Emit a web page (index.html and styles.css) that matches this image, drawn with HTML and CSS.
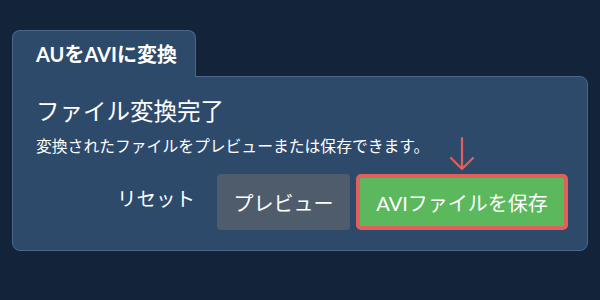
FILE: index.html
```html
<!DOCTYPE html>
<html lang="ja">
<head>
<meta charset="utf-8">
<link rel="stylesheet" href="styles.css">
</head>
<body>
<div class="wrap">
  <div class="tab">AUをAVIに変換</div>
  <div class="panel">
    <h1 class="title">ファイル変換完了</h1>
    <p class="desc">変換されたファイルをプレビューまたは保存できます。</p>
    <div class="actions">
      <button class="btn btn-reset">リセット</button>
      <button class="btn btn-preview">プレビュー</button>
      <div class="save-wrap">
        <svg class="arrow" width="30" height="36" viewBox="0 0 30 36" aria-hidden="true">
          <path d="M15 2 V33 M4 22 L15 33 L26 22" fill="none" stroke="#e0605a" stroke-width="2.2" stroke-linecap="round" stroke-linejoin="round"/>
        </svg>
        <button class="btn btn-save">AVIファイルを保存</button>
      </div>
    </div>
  </div>
</div>
</body>
</html>
```
FILE: styles.css
```css
* { box-sizing: border-box; }
html, body { margin: 0; padding: 0; }
body {
  width: 600px;
  height: 300px;
  background: #12233a;
  font-family: "Lato", "Noto Sans CJK JP", sans-serif;
  color: #ffffff;
  overflow: hidden;
}
.wrap {
  padding: 30px 0 0 12px;
  width: 588px;
}
.tab {
  display: inline-block;
  height: 47px;
  margin-bottom: -1px;
  position: relative;
  z-index: 1;
  width: 184px;
  padding: 9px 0 0 23px;
  background: #2e4a6b;
  border: 1px solid #4c6789;
  border-bottom: none;
  border-radius: 8px 8px 0 0;
  font-size: 20px;
  font-weight: 700;
  line-height: 28px;
}
.panel {
  background: #2e4a6b;
  border: 1px solid #4c6789;
  border-radius: 0 8px 8px 8px;
  height: 175px;
  padding: 18px 19px 0 23px;
}
.title {
  margin: 0;
  font-size: 23.5px;
  font-weight: 400;
  line-height: 32px;
}
.desc {
  margin: 8px 0 0;
  font-size: 15.8px;
  line-height: 22px;
}
.actions {
  display: flex;
  justify-content: flex-end;
  align-items: center;
  margin-top: 17px;
}
.btn {
  font-family: inherit;
  color: #ffffff;
  border: none;
  font-size: 20px;
  height: 56px;
  cursor: pointer;
}
.btn-reset {
  background: transparent;
  font-size: 19.5px;
  padding: 0 22px 0 0;
  height: 48px;
  margin-top: -10px;
}
.btn-preview {
  background: #4e5c6b;
  border-radius: 4px;
  width: 133px;
  margin-right: 6px;
}
.save-wrap {
  position: relative;
}
.arrow {
  position: absolute;
  left: 91px;
  top: -38px;
  display: block;
}
.btn-save {
  display: block;
  background: #5cb85c;
  border: 4px solid #e0605a;
  border-radius: 5px;
  width: 212px;
}
```
